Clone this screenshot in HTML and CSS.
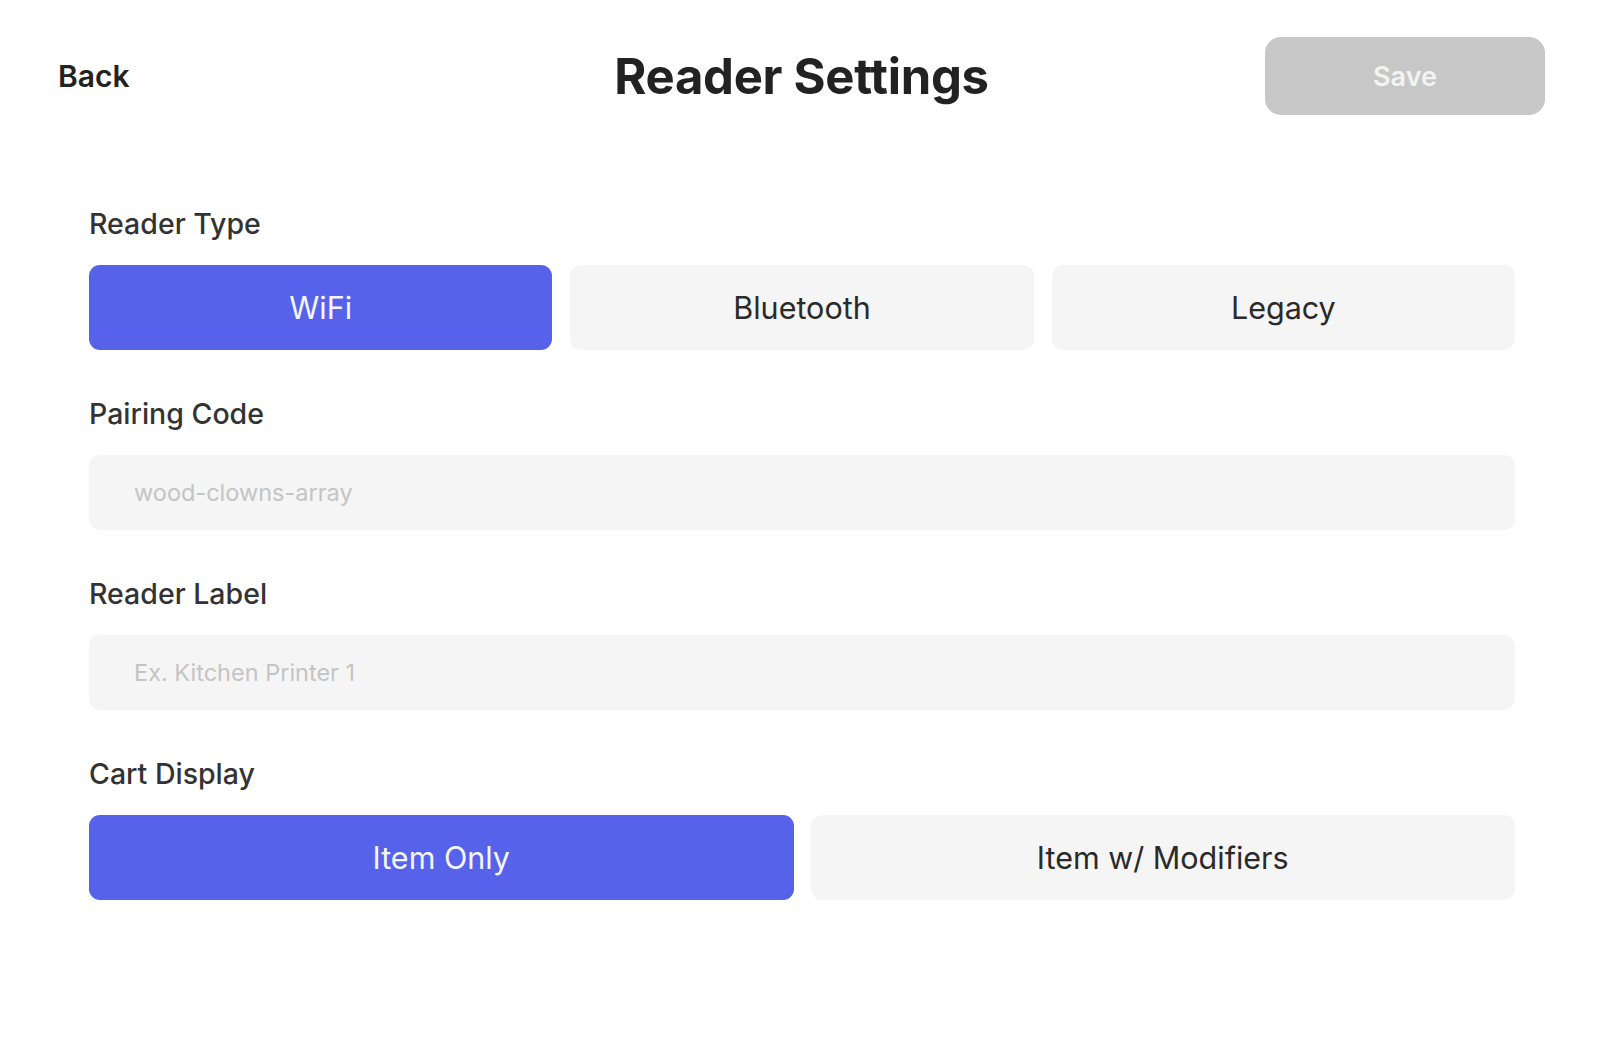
FILE: index.html
```html
<!DOCTYPE html>
<html lang="en">
<head>
<meta charset="utf-8">
<title>Reader Settings</title>
<link rel="stylesheet" href="styles.css">
</head>
<body>
<div class="page">
  <header class="header">
    <div class="header-left"><button class="back">Back</button></div>
    <h1 class="title">Reader Settings</h1>
    <div class="header-right"><button class="save" disabled>Save</button></div>
  </header>
  <main class="form">
    <section class="field">
      <div class="label">Reader Type</div>
      <div class="seg seg-3">
        <button class="opt active">WiFi</button>
        <button class="opt">Bluetooth</button>
        <button class="opt">Legacy</button>
      </div>
    </section>
    <section class="field">
      <div class="label">Pairing Code</div>
      <input class="input" type="text" placeholder="wood-clowns-array">
    </section>
    <section class="field">
      <div class="label">Reader Label</div>
      <input class="input" type="text" placeholder="Ex. Kitchen Printer 1">
    </section>
    <section class="field">
      <div class="label">Cart Display</div>
      <div class="seg seg-2">
        <button class="opt active">Item Only</button>
        <button class="opt">Item w/ Modifiers</button>
      </div>
    </section>
  </main>
</div>
</body>
</html>
```

FILE: styles.css
```css
* { box-sizing: border-box; }
html, body { margin: 0; padding: 0; background: #ffffff; }
body { font-family: Inter, "Liberation Sans", sans-serif; color: #222; }

.page { width: 1604px; min-height: 1054px; }

.header {
  display: grid;
  grid-template-columns: 1fr auto 1fr;
  align-items: center;
  padding: 37px 59px 0 58px;
  height: 115px;
}
.header-left { display: flex; justify-content: flex-start; }
.header-right { display: flex; justify-content: flex-end; }

.back {
  border: none; background: none; padding: 0; margin: 0;
  font-family: inherit; font-size: 30px; font-weight: 600; color: #222;
  cursor: pointer;
}
.title {
  margin: 0; font-size: 49px; font-weight: 700; color: #222;
  letter-spacing: -0.3px;
}
.save {
  width: 280px; height: 78px; border: none; border-radius: 16px;
  background: #c7c7c7; color: #f3f3f3;
  font-family: inherit; font-size: 27px; font-weight: 600;
}

.form {
  display: flex; flex-direction: column; gap: 47px;
  padding: 92px 89px 0 89px;
}
.field { display: flex; flex-direction: column; gap: 24px; }
.label {
  font-size: 28.5px; line-height: 34px; font-weight: 500; color: #333;
}

.seg { display: grid; gap: 18px; }
.seg-3 { grid-template-columns: repeat(3, 1fr); }
.seg-2 { grid-template-columns: repeat(2, 1fr); gap: 17px; }

.opt {
  height: 85px; border: none; border-radius: 11px;
  background: #f5f5f5; color: #2a2a2a;
  font-family: inherit; font-size: 30.5px; font-weight: 400;
}
.opt.active { background: #5662ea; color: #f4f5ff; }

.input {
  display: block; width: 100%; height: 75px; border: none; border-radius: 11px;
  background: #f5f5f5; padding: 0 45px; outline: none;
  font-family: inherit; font-size: 23.5px; color: #333;
}
.input::placeholder { color: #c4c4c4; }
```
